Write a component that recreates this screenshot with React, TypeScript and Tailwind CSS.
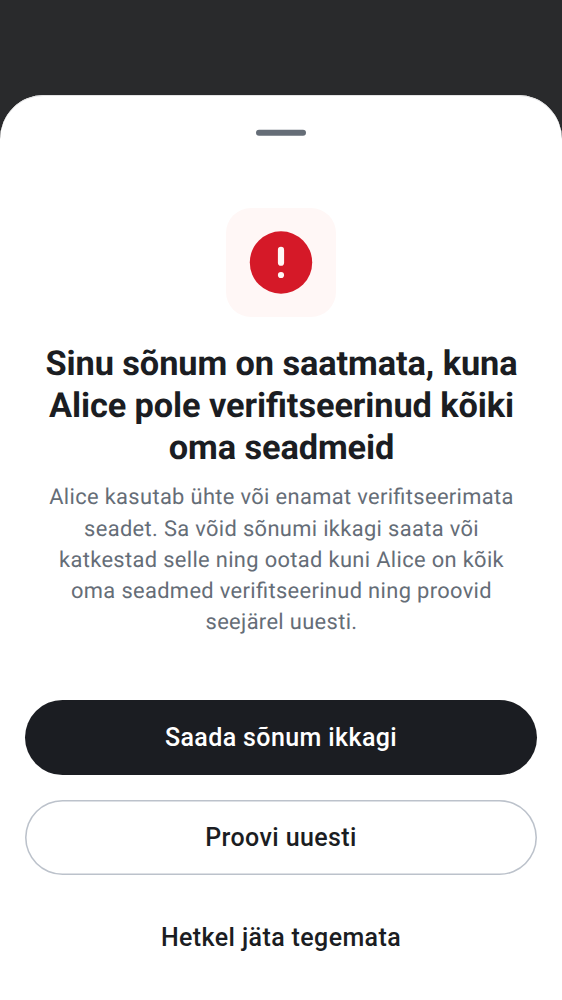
export default function App() {
  return (
    <div className="flex h-[1000px] w-[562px] flex-col overflow-hidden bg-[#292a2c] pt-[95px] font-['Roboto',sans-serif] text-[#1b1d22] [font-feature-settings:'liga'] [text-rendering:geometricPrecision]">
      <main className="flex flex-1 flex-col items-center rounded-t-[44px] bg-white px-[25px] pt-[35px] shadow-[inset_0_1px_0_#e3e3e4]">
        <div className="h-[6px] w-[50px] -translate-y-[0.2px] rounded-full bg-[#656d77]" />
        <div className="mt-[72px] flex h-[109px] w-[110px] items-center justify-center rounded-[25px] bg-[#fff7f6]">
          <svg className="h-[63px] w-[64px]" viewBox="0 0 64 63" aria-hidden="true">
            <circle cx="32" cy="31.5" r="31.2" fill="#d51928" />
            <rect x="28.9" y="15.8" width="6.2" height="19" rx="3.1" fill="#fff7f6" />
            <circle cx="32" cy="44" r="3.1" fill="#fff7f6" />
          </svg>
        </div>
        <h1 className="mt-[26px] pl-[1px] text-center text-[34.375px] leading-[42.1875px] font-bold tracking-[-0.1px] whitespace-nowrap">
          Sinu sõnum on saatmata, kuna<br />Alice pole verifitseerinud kõiki<br />oma seadmeid
        </h1>
        <p className="mt-[12.75px] pl-[1px] text-center text-[21.875px] leading-[31.25px] tracking-[0.35px] whitespace-nowrap text-[#656d77]">
          Alice kasutab ühte või enamat verifitseerimata<br />seadet. Sa võid sõnumi ikkagi saata või<br />katkestad selle ning ootad kuni Alice on kõik<br />oma seadmed verifitseerinud ning proovid<br />seejärel uuesti.
        </p>
        <div className="mt-auto flex w-full flex-col gap-[25px] pb-[25px] text-[25px] leading-[37.5px] font-medium tracking-[0.39px]">
          <button className="h-[75px] rounded-full bg-[#1b1d22] text-white">Saada sõnum ikkagi</button>
          <button className="h-[75px] rounded-full shadow-[inset_0_0_0_1.56px_#bcc2cb]">Proovi uuesti</button>
          <button className="h-[75px] rounded-full">Hetkel jäta tegemata</button>
        </div>
      </main>
    </div>
  );
}
